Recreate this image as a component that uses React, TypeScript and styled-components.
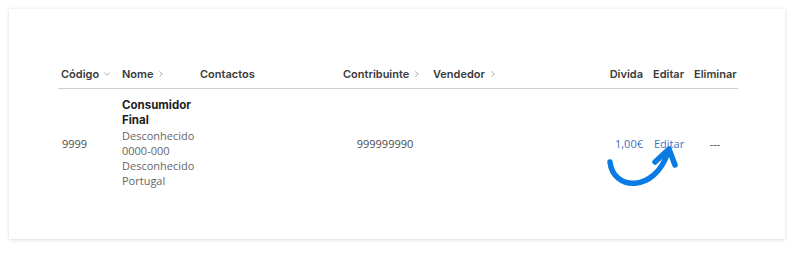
import React from "react";
import styled, { createGlobalStyle } from "styled-components";
import { ChevronDown, ChevronRight } from "lucide-react";

const Global = createGlobalStyle`
  html, body { margin: 0; padding: 0; background: #ffffff; }
  body { width: 800px; height: 254px; overflow: hidden; }
`;

const Page = styled.div`
  width: 800px;
  height: 254px;
  padding: 9px 15px 15px 9px;
  box-sizing: border-box;
`;

const Card = styled.div`
  position: relative;
  width: 776px;
  height: 230px;
  background: #fff;
  box-shadow: 0 1px 4px rgba(40, 50, 80, 0.14), 0 0 2px rgba(40, 50, 80, 0.06);
  padding: 55px 47px 0 49px;
  box-sizing: border-box;
`;

const cols = "61px 78px 143px 90px 1fr 50px 40px 50px";

const HeadRow = styled.div`
  display: grid;
  grid-template-columns: ${cols};
  height: 25px;
  box-sizing: border-box;
  padding-bottom: 4px;
  align-items: center;
  border-bottom: 1px solid #cfcfcf;
`;

const Th = styled.div<{ $align?: string; $pl?: number; $pr?: number }>`
  display: flex;
  align-items: center;
  justify-content: ${(p) => p.$align ?? "flex-start"};
  gap: 3px;
  padding-left: ${(p) => p.$pl ?? 3}px;
  padding-right: ${(p) => p.$pr ?? 0}px;
  font-family: "Inter", "Noto Sans", sans-serif;
  font-weight: 600;
  font-size: 11px;
  color: #3a3a3a;
  white-space: nowrap;
  svg { color: #777; }
`;

const BodyRow = styled.div`
  display: grid;
  grid-template-columns: ${cols};
  align-items: center;
  padding: 9px 0 10px;
`;

const Td = styled.div<{ $align?: string; $pl?: number; $pr?: number }>`
  text-align: ${(p) => p.$align ?? "left"};
  padding-left: ${(p) => p.$pl ?? 3}px;
  padding-right: ${(p) => p.$pr ?? 0}px;
  font-family: "Open Sans", sans-serif;
  font-size: 11px;
  line-height: 15px;
  color: #4a4a4a;
  white-space: nowrap;
`;

const NameCell = styled(Td)`
  white-space: normal;
  color: #666;
`;

const NameTitle = styled.div`
  font-family: "Inter", "Noto Sans", sans-serif;
  font-weight: 700;
  color: #1e1e1e;
  font-size: 11.5px;
`;

const Link = styled.span`
  color: #3d72c4;
`;

const Arrow = styled.svg`
  position: absolute;
  left: 596px;
  top: 130px;
  pointer-events: none;
`;

export default function App() {
  return (
    <>
      <Global />
      <Page>
        <Card>
          <HeadRow>
            <Th>Código <ChevronDown size={10} strokeWidth={1.5} /></Th>
            <Th>Nome <ChevronRight size={10} strokeWidth={1.5} /></Th>
            <Th>Contactos</Th>
            <Th>Contribuinte <ChevronRight size={10} strokeWidth={1.5} /></Th>
            <Th>Vendedor <ChevronRight size={10} strokeWidth={1.5} /></Th>
            <Th $align="flex-end" $pr={5} $pl={0}>Divida</Th>
            <Th $pl={5}>Editar</Th>
            <Th $pl={6}>Eliminar</Th>
          </HeadRow>
          <BodyRow>
            <Td $pl={4}>9999</Td>
            <NameCell>
              <NameTitle>Consumidor</NameTitle>
              <NameTitle>Final</NameTitle>
              <div>Desconhecido</div>
              <div>0000-000</div>
              <div>Desconhecido</div>
              <div>Portugal</div>
            </NameCell>
            <Td></Td>
            <Td $align="center" $pl={0}>999999990</Td>
            <Td></Td>
            <Td $align="right" $pl={0} $pr={5}><Link>1,00€</Link></Td>
            <Td $pl={6}><Link>Editar</Link></Td>
            <Td $align="center" $pl={4}>---</Td>
          </BodyRow>
          <Arrow width="90" height="58" viewBox="0 0 90 58">
            <path
              d="M5 23 C 8 52, 50 54, 63 13"
              fill="none"
              stroke="#0b7be4"
              strokeWidth="5.5"
              strokeLinecap="round"
            />
            <path
              d="M50 23 L64 10 L70 26"
              fill="none"
              stroke="#0b7be4"
              strokeWidth="5.5"
              strokeLinecap="round"
              strokeLinejoin="round"
            />
          </Arrow>
        </Card>
      </Page>
    </>
  );
}
